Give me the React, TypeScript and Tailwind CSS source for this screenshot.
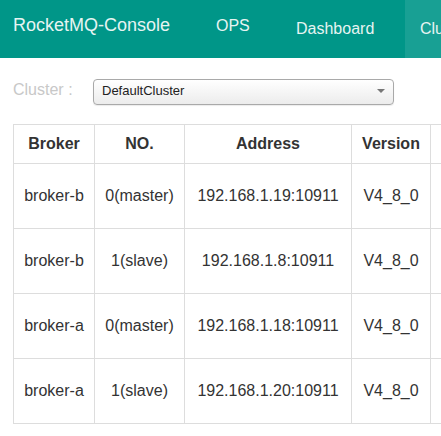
import React from "react";

const rows = [
  ["broker-b", "0(master)", "192.168.1.19:10911", "V4_8_0"],
  ["broker-b", "1(slave)", "192.168.1.8:10911", "V4_8_0"],
  ["broker-a", "0(master)", "192.168.1.18:10911", "V4_8_0"],
  ["broker-a", "1(slave)", "192.168.1.20:10911", "V4_8_0"],
];

export default function App() {
  return (
    <div
      className="w-[441px] h-[436px] overflow-hidden bg-white relative"
      style={{ fontFamily: '"Liberation Sans", Arial, sans-serif' }}
    >
      <div className="h-[58px] bg-[#009688] flex text-[#e6f4f2] whitespace-nowrap">
        <div className="pl-[13px] pt-[15px] text-[18px] leading-[20px] w-[216px] shrink-0">
          RocketMQ-Console
        </div>
        <div className="pt-[16px] text-[16px] leading-[20px] w-[80px] shrink-0">OPS</div>
        <div className="pt-[19px] text-[16px] leading-[20px] w-[109px] shrink-0">Dashboard</div>
        <div className="bg-[#18a094] pl-[15px] pt-[19px] text-[16px] leading-[20px] w-[120px] shrink-0">
          Cluster
        </div>
      </div>

      <div className="flex items-start pt-[21px] pl-[13px]">
        <div className="w-[80px] shrink-0 text-[16px] leading-[20px] text-[#c8c8c8] mt-[1px]">
          Cluster :
        </div>
        <div className="w-[301px] h-[26px] shrink-0 border border-[#a9a9a9] rounded-[4px] bg-gradient-to-b from-white to-[#ececec] shadow-[0_1px_1px_rgba(0,0,0,0.08)] flex justify-between pl-[8px] pr-[8px] pt-[3px]">
          <span className="text-[13px] leading-[16px] text-[#222]">DefaultCluster</span>
          <span className="mt-[6px] w-0 h-0 border-l-[4px] border-r-[4px] border-t-[4px] border-l-transparent border-r-transparent border-t-[#777]" />
        </div>
      </div>

      <div className="pl-[13px] pt-[19px]">
        <table className="border-collapse table-fixed text-[16px] leading-[20px] text-[#333] w-[660px]">
          <colgroup>
            <col className="w-[81px]" />
            <col className="w-[90px]" />
            <col className="w-[167px]" />
            <col className="w-[79px]" />
            <col className="w-[243px]" />
          </colgroup>
          <thead>
            <tr className="h-[39px]">
              {["Broker", "NO.", "Address", "Version"].map((h) => (
                <th key={h} className="border border-[#dddddd] font-bold text-center align-middle p-0 whitespace-nowrap">
                  {h}
                </th>
              ))}
              <th className="border border-[#dddddd] p-0" />
            </tr>
          </thead>
          <tbody>
            {rows.map((r, i) => (
              <tr key={i} className="h-[65px]">
                {r.map((c, j) => (
                  <td key={j} className="border border-[#dddddd] text-center align-middle p-0 whitespace-nowrap">
                    {c}
                  </td>
                ))}
                <td className="border border-[#dddddd] p-0" />
              </tr>
            ))}
          </tbody>
        </table>
      </div>
    </div>
  );
}
